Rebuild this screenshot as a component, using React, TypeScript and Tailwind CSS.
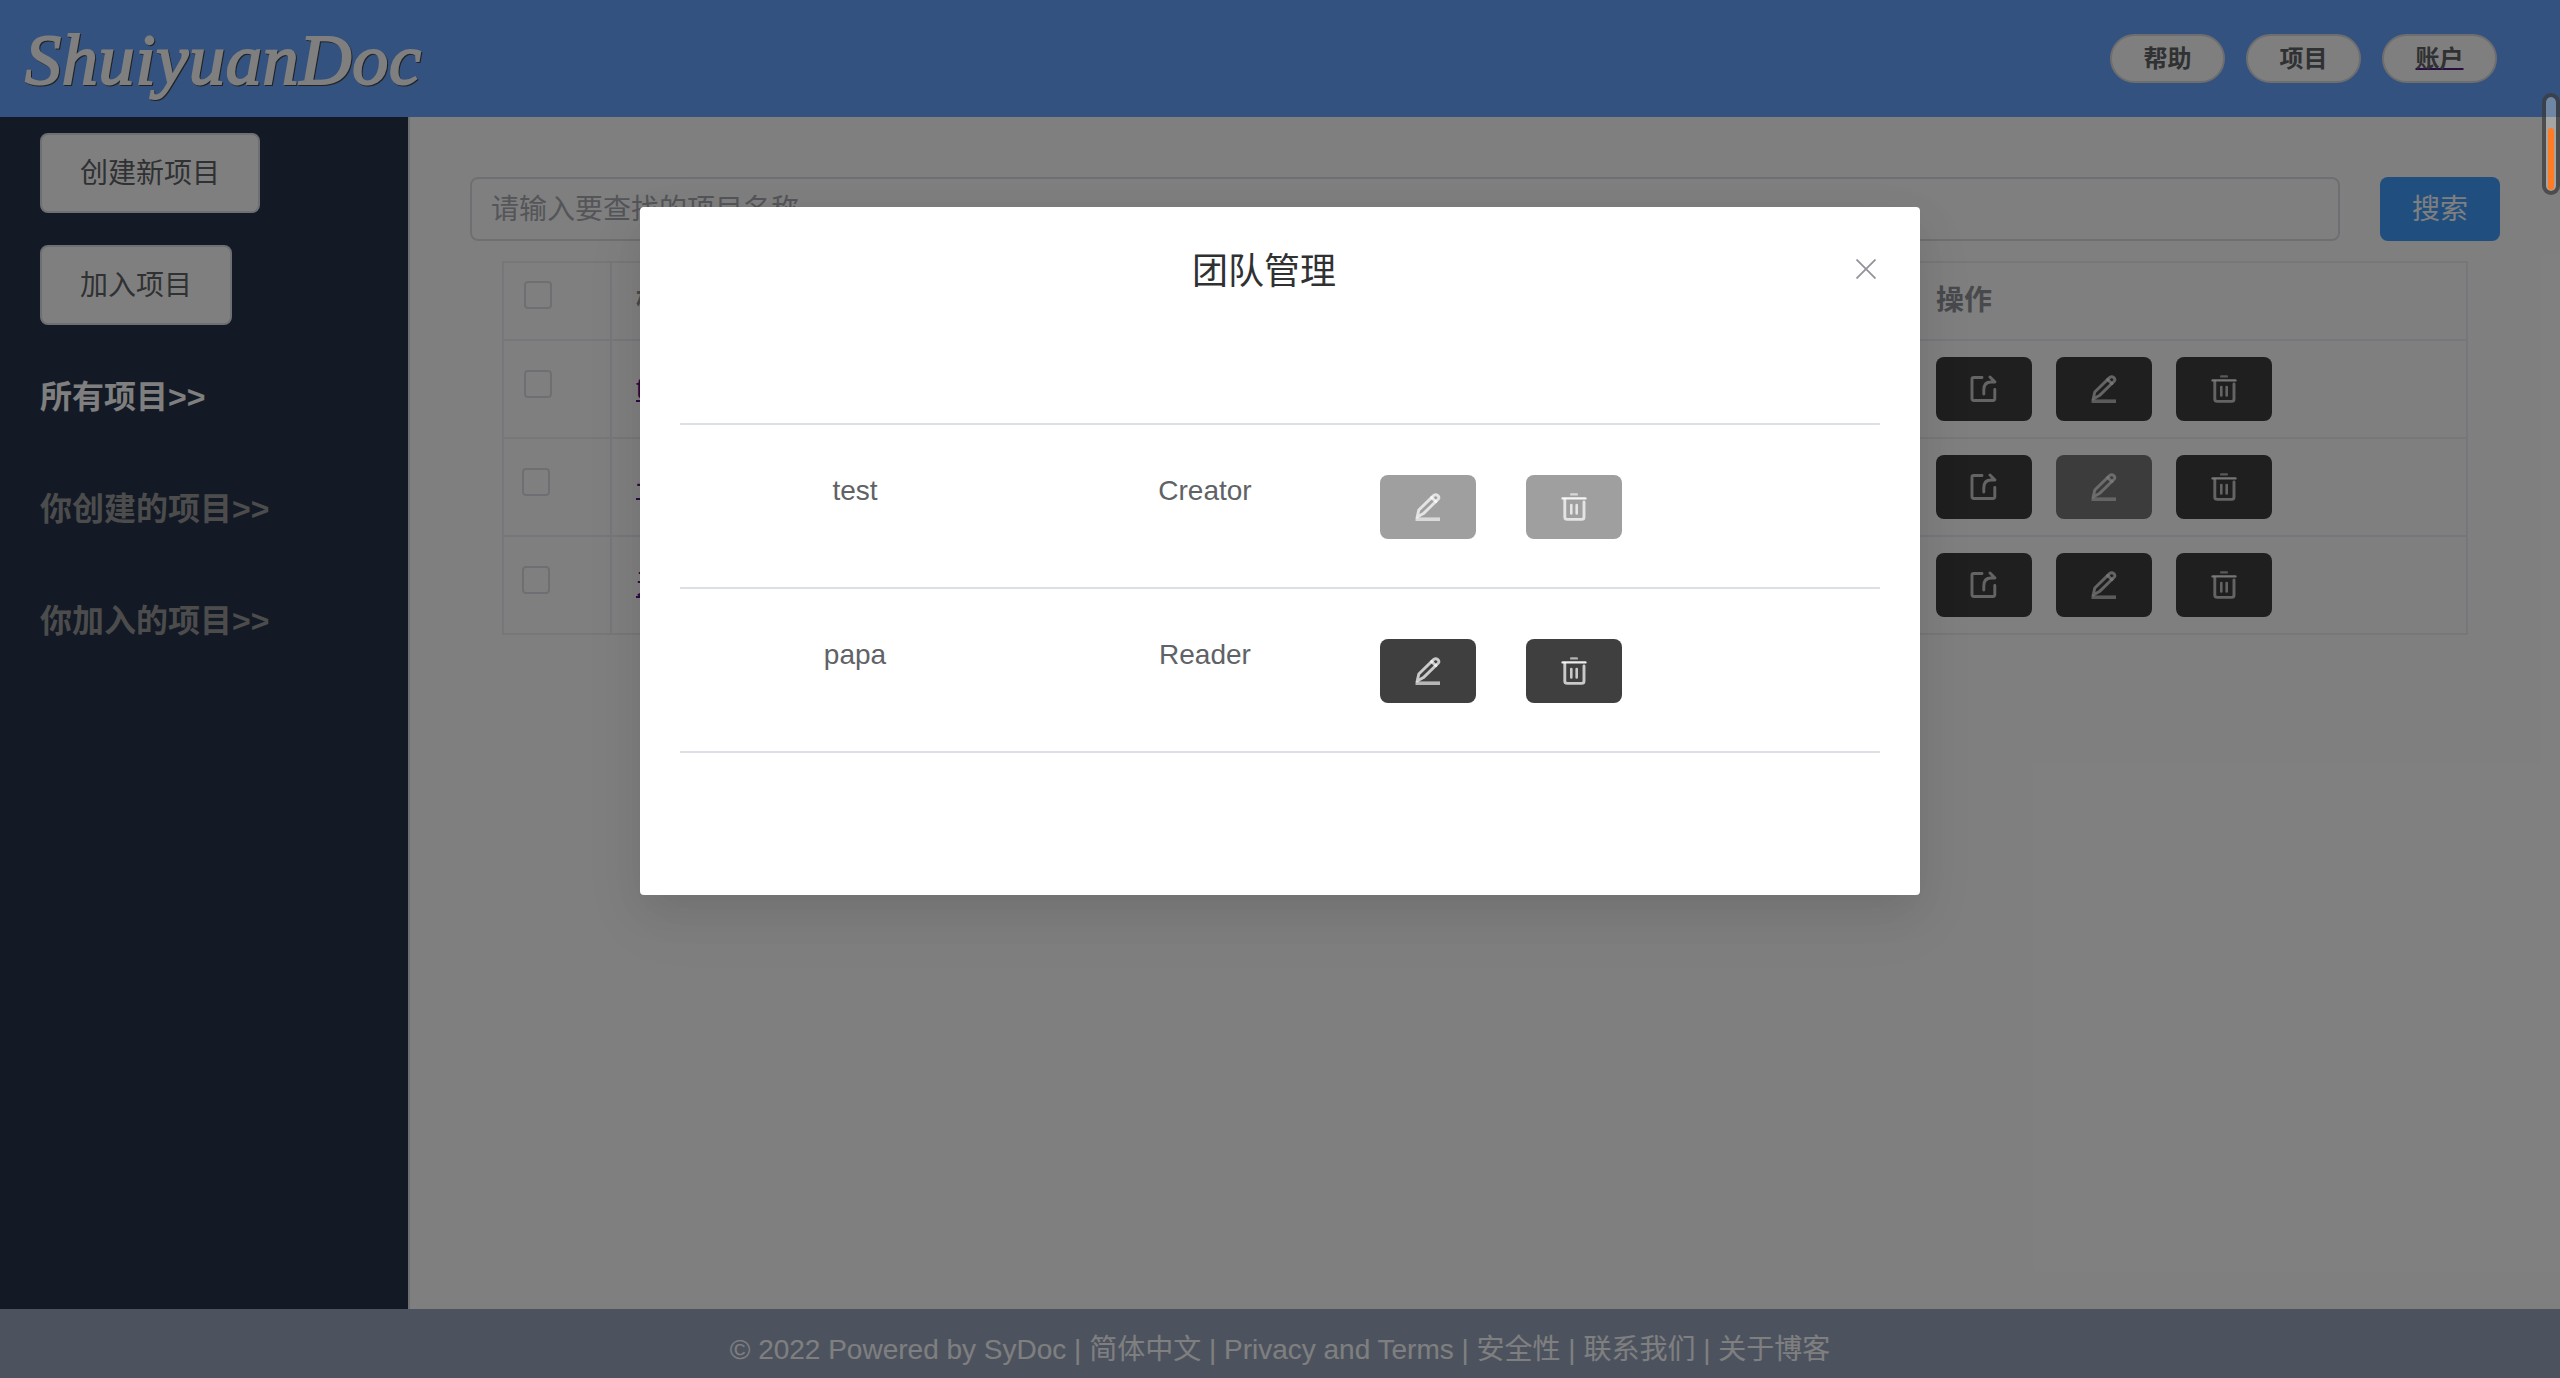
import type { ReactNode } from "react";

function IconBox({ children }: { children: ReactNode }) {
  return (
    <svg viewBox="0 0 28 28" className="h-7 w-7" fill="none" stroke="#ffffff" strokeOpacity="0.72" strokeWidth="2.9" strokeLinecap="round" strokeLinejoin="round">
      {children}
    </svg>
  );
}

const ShareIcon = () => (
  <IconBox>
    <path d="M12 2.5H3.6Q2 2.5 2 4V23.5Q2 25.5 4 25.5H22.8Q24.8 25.5 24.8 23.5V14.5" />
    <path d="M13.8 19V15Q13.8 7 21 7H25L20 2" />
  </IconBox>
);

const EditIcon = () => (
  <IconBox>
    <path d="M19.8 2.4Q21.8 0.8 23.8 2.6Q25.6 4.4 24.4 6L9.4 20.6L3.2 24L4.8 17Z" />
    <path d="M17.6 4.6L22 8.6" />
    <path d="M1.5 26.2H26" strokeOpacity="0.62" strokeWidth="3.6" strokeLinecap="butt" />
  </IconBox>
);

const TrashIcon = () => (
  <IconBox>
    <path d="M11.2 1.4H16.8" strokeOpacity="0.6" strokeWidth="2.4" />
    <path d="M2.6 5.4H25.4" strokeWidth="2.4" strokeOpacity="0.9" />
    <path d="M4.8 6.5V24Q4.8 26.4 7.4 26.4H21.6Q24 26.4 24 24V9" />
    <path d="M11.3 12V20.5M16.7 12V20.5" strokeWidth="2.6" />
  </IconBox>
);

function ActionButton({ kind, className = "bg-[#3f3f3f]" }: { kind: "share" | "edit" | "trash"; className?: string }) {
  return (
    <button className={`flex h-16 w-24 shrink-0 items-center justify-center rounded-lg ${className}`}>
      {kind === "share" && <ShareIcon />}
      {kind === "edit" && <EditIcon />}
      {kind === "trash" && <TrashIcon />}
    </button>
  );
}

function NavPill({ label, linked }: { label: string; linked?: boolean }) {
  return (
    <button className="flex h-[49px] w-[115px] items-center justify-center rounded-full border-2 border-[#dcdcdf] bg-white text-2xl leading-none font-bold text-[#606266]">
      <span className={linked ? "underline decoration-[#551a8b] decoration-2 underline-offset-[1px]" : ""}>{label}</span>
    </button>
  );
}

function Checkbox({ shifted }: { shifted?: boolean }) {
  return <span className={`block h-7 w-7 rounded border-2 border-[#dcdfe6] bg-white ${shifted ? "ml-[18px]" : "ml-5"}`} />;
}

function Header() {
  return (
    <header className="flex h-[117px] shrink-0 items-start justify-between bg-[#66a5ff]">
      <svg className="h-[117px] w-[440px]" viewBox="0 0 440 117">
        <text
          x="25"
          y="84"
          fontSize="72"
          fontStyle="italic"
          fontFamily="'Monotype Corsiva','Z003','URW Chancery L','Liberation Serif',serif"
          textLength="396"
          fill="#ffffff"
          stroke="#ffffff"
          strokeWidth="2"
          className="drop-shadow-[1px_1px_0_#444]"
        >
          ShuiyuanDoc
        </text>
      </svg>
      <nav className="mt-[34px] mr-[63px] flex gap-[21px]">
        <NavPill label="帮助" />
        <NavPill label="项目" />
        <NavPill label="账户" linked />
      </nav>
    </header>
  );
}

function Sidebar() {
  return (
    <aside className="flex w-[410px] shrink-0 flex-col items-start gap-8 border-r-2 border-[#dcdfe6] bg-[#26344c] pt-4 pl-10">
      <button className="h-20 w-[220px] rounded-lg border-2 border-[#dcdfe6] bg-white pt-0.5 text-[28px] text-[#606266]">创建新项目</button>
      <button className="h-20 w-48 rounded-lg border-2 border-[#dcdfe6] bg-white pt-0.5 text-[28px] text-[#606266]">加入项目</button>
      <a className="flex h-20 items-center text-[32px] font-bold text-white">所有项目&gt;&gt;</a>
      <a className="flex h-20 items-center text-[32px] font-bold text-[#999999]">你创建的项目&gt;&gt;</a>
      <a className="flex h-20 items-center text-[32px] font-bold text-[#999999]">你加入的项目&gt;&gt;</a>
    </aside>
  );
}

const projects = [
  { name: "test", locked: false },
  { name: "一个项目", locked: true },
  { name: "天天项目", locked: false },
];

function ProjectTable() {
  return (
    <div className="mt-5 ml-[92px] w-[1966px] border-2 border-[#ebeef5] text-[28px]">
      <div className="flex h-[76px]">
        <div className="w-[108px] border-r-2 border-[#ebeef5] pt-[18px]">
          <Checkbox />
        </div>
        <div className="flex w-[1300px] items-center pl-6 font-bold text-[#909399]">标题</div>
        <div className="flex items-center pl-6 font-bold text-[#909399]">操作</div>
      </div>
      {projects.map((p, i) => (
        <div key={p.name} className="flex h-[98px] border-t-2 border-[#ebeef5]">
          <div className="w-[108px] border-r-2 border-[#ebeef5] pt-[29px]">
            <Checkbox shifted={i > 0} />
          </div>
          <div className="flex w-[1300px] items-center pl-6 text-[#551a8b] underline">{p.name}</div>
          <div className="flex items-center gap-6 pl-6">
            <ActionButton kind="share" />
            <ActionButton kind="edit" className={p.locked ? "bg-[#787878]" : "bg-[#3f3f3f]"} />
            <ActionButton kind="trash" />
          </div>
        </div>
      ))}
    </div>
  );
}

function Content() {
  return (
    <main className="flex-1 bg-white pt-[60px]">
      <div className="flex gap-10 pl-[60px]">
        <div className="flex h-16 w-[1870px] items-center rounded-lg border-2 border-[#dcdfe6] pt-0.5 pl-[19px] text-[28px] text-[#a8abb2]">
          请输入要查找的项目名称
        </div>
        <button className="h-16 w-[120px] rounded-lg bg-[#409eff] pt-0.5 text-[28px] text-white">搜索</button>
      </div>
      <ProjectTable />
    </main>
  );
}

function MemberRow({ name, role, locked }: { name: string; role: string; locked?: boolean }) {
  const tone = locked ? "bg-[#9f9f9f]" : "bg-[#3f3f3f]";
  return (
    <div className="flex h-[164px] items-start border-b-2 border-[#dcdfe6] text-[28px] leading-8 text-[#606266]">
      <div className="mt-[50px] w-[350px] text-center">{name}</div>
      <div className="mt-[50px] w-[350px] text-center">{role}</div>
      <div className="mt-[50px] flex gap-[50px]">
        <ActionButton kind="edit" className={tone} />
        <ActionButton kind="trash" className={tone} />
      </div>
    </div>
  );
}

function TeamDialog() {
  return (
    <section className="absolute top-[207px] left-[640px] h-[688px] w-[1280px] rounded bg-white px-10 shadow-[0_24px_64px_8px_rgba(0,0,0,0.04),0_16px_40px_rgba(0,0,0,0.08)]">
      <div className="flex h-[216px] items-start">
        <h2 className="mt-[41px] flex-1 pr-2 text-center text-4xl leading-[48px] text-[#303133]">团队管理</h2>
        <svg viewBox="0 0 20 20" className="mt-[52px] mr-1 h-5 w-5" stroke="#909399" strokeWidth="1.8">
          <path d="M0.5 0.5L19.5 19.5M19.5 0.5L0.5 19.5" />
        </svg>
      </div>
      <div className="border-t-2 border-[#dcdfe6]">
        <MemberRow name="test" role="Creator" locked />
        <MemberRow name="papa" role="Reader" />
      </div>
    </section>
  );
}

export default function App() {
  return (
    <div className="relative flex h-[1378px] w-[2560px] flex-col overflow-hidden bg-white font-['Liberation_Sans','Noto_Sans_CJK_SC',sans-serif]">
      <Header />
      <div className="flex flex-1">
        <Sidebar />
        <Content />
      </div>
      <footer className="flex h-[69px] shrink-0 items-center justify-center bg-[#99a6be] pt-3 text-[28px] whitespace-nowrap text-white">
        © 2022 Powered by SyDoc | 简体中文 | Privacy and Terms | 安全性 | 联系我们 | 关于博客
      </footer>
      <div className="absolute inset-0 bg-black/50" />
      <TeamDialog />
      <div className="absolute top-[93px] left-[2542px] h-[102px] w-[18px] rounded-full border-4 border-[#3c3c3c]/75 bg-white/30 bg-clip-padding">
        <div className="mx-auto mt-[31px] h-[62px] w-1.5 rounded-full bg-[#ff7b24]" />
      </div>
    </div>
  );
}
